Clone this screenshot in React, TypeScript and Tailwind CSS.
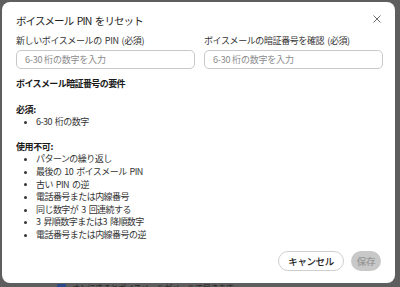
import React from 'react';

const FONT = { fontFamily: '"Noto Sans CJK JP", "Noto Sans", sans-serif' };

const mustHave = ['6-30 桁の数字'];

const notAllowed = [
  'パターンの繰り返し',
  '最後の 10 ボイスメール PIN',
  '古い PIN の逆',
  '電話番号または内線番号',
  '同じ数字が 3 回連続する',
  '3 昇順数字または3 降順数字',
  '電話番号または内線番号の逆',
];

const Bullet: React.FC<{ text: string }> = ({ text }) => (
  <li className="flex items-center h-[12.6px]">
    <span className="w-[3px] h-[3px] rounded-full bg-[#333] ml-[8px] mr-[9px]" />
    <span className="text-[9px] leading-[12.6px] tracking-[-0.55px] [word-spacing:1.5px] text-[#333] whitespace-nowrap">{text}</span>
  </li>
);

const Field: React.FC<{ label: string }> = ({ label }) => (
  <div className="flex-1 flex flex-col">
    <label className="text-[9px] leading-[11px] tracking-[-0.4px] [word-spacing:1.5px] text-[#333] whitespace-nowrap">{label}</label>
    <input
      className="mt-[4px] h-[19px] rounded-[5px] border border-[#c8c8c8] px-[8px] text-[9px] tracking-[-0.2px] text-[#333] placeholder:text-[#8a8a8a] outline-none bg-white"
      placeholder="6-30 桁の数字を入力"
      style={FONT}
    />
  </div>
);

export default function App() {
  return (
    <div className="w-[400px] h-[287px] bg-[#5e5e5e] flex flex-col overflow-hidden" style={FONT}>
      <div className="ml-[2px] mt-[2px] w-[393px] h-[281px] bg-white rounded-[8px] flex flex-col pt-[12px] pl-[14px] pr-[12px] pb-[12px]">
        {/* Header */}
        <div className="flex items-center justify-between h-[14px]">
          <div className="text-[10.5px] leading-[14px] tracking-[-0.9px] [word-spacing:2px] text-[#1f1f1f] whitespace-nowrap">ボイスメール PIN をリセット</div>
          <button aria-label="閉じる" className="w-[10px] h-[10px] flex items-center justify-center mr-[1px] -mt-[4px]">
            <svg width="8" height="8" viewBox="0 0 8 8" fill="none">
              <path d="M0.5 0.5L7.5 7.5M7.5 0.5L0.5 7.5" stroke="#6b6b6b" strokeWidth="1" />
            </svg>
          </button>
        </div>

        {/* Inputs */}
        <div className="flex gap-[9px] mt-[7px]">
          <Field label="新しいボイスメールの PIN (必須)" />
          <Field label="ボイスメールの暗証番号を確認 (必須)" />
        </div>

        {/* Requirements */}
        <div className="mt-[9px] text-[9px] leading-[12px] font-bold tracking-[-0.6px] text-[#1a1a1a]">ボイスメール暗証番号の要件</div>

        <div className="mt-[13.7px] text-[9px] leading-[12.6px] font-bold tracking-[-0.4px] text-[#1a1a1a]">必須:</div>
        <ul>
          {mustHave.map(t => (
            <Bullet key={t} text={t} />
          ))}
        </ul>

        <div className="mt-[12px] text-[9px] leading-[12.6px] font-bold tracking-[-0.4px] text-[#1a1a1a]">使用不可:</div>
        <ul>
          {notAllowed.map(t => (
            <Bullet key={t} text={t} />
          ))}
        </ul>

        {/* Footer */}
        <div className="mt-auto flex justify-end items-center gap-[7px] pr-[2px]">
          <button className="h-[20px] px-[9px] rounded-full border border-[#cfcfcf] bg-white text-[9.5px] font-medium tracking-[-0.4px] text-[#222]">
            キャンセル
          </button>
          <button disabled className="h-[20px] px-[6px] rounded-full bg-[#c8c8c8] text-[9.5px] font-medium tracking-[-0.4px] text-[#979797]">
            保存
          </button>
        </div>
      </div>

      {/* page behind the overlay */}
      <div className="flex items-start gap-[6px] pl-[57px] pt-[1px] h-[4px]">
        <span className="w-[9px] h-[6px] bg-[#2c4a8a]" />
        <span className="text-[8px] leading-[8px] text-[#1e1e1e] whitespace-nowrap tracking-[-0.3px]">
          オンにするとボイスメールがメールで届きます
        </span>
      </div>
    </div>
  );
}
